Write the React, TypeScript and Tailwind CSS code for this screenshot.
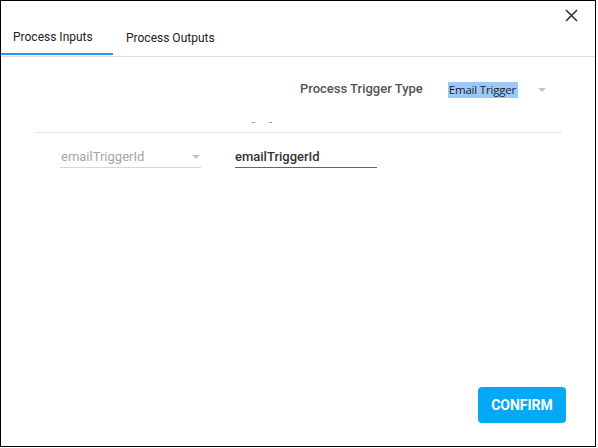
import React, { useState } from 'react';

const Caret: React.FC<{ className?: string }> = ({ className }) => (
  <svg width="8" height="4" viewBox="0 0 8 4" className={className}>
    <path d="M0 0 L8 0 L4 4 Z" fill="#c4c4c4" />
  </svg>
);

const App: React.FC = () => {
  const [tab, setTab] = useState('inputs');

  return (
    <div className="w-[596px] h-[447px] border border-black bg-white relative font-['Roboto',sans-serif] text-[#333]">
      {/* close */}
      <button className="absolute right-[17px] top-[8px] w-[13px] h-[13px]">
        <svg width="13" height="13" viewBox="0 0 13 13">
          <path d="M1 1 L12 12 M12 1 L1 12" stroke="#333" strokeWidth="1.6" />
        </svg>
      </button>

      <div className="flex h-[54px]">
        <button
          onClick={() => setTab('inputs')}
          className={`w-[112px] h-full pt-[20px] pl-[12px] text-left text-[12px] text-[#222] border-b-2 ${
            tab === 'inputs' ? 'border-[#2196f3]' : 'border-transparent'
          }`}
        >
          <span className="leading-[28px]">Process Inputs</span>
        </button>
        <button
          onClick={() => setTab('outputs')}
          className={`h-full pt-[21px] pl-[13px] text-left text-[12px] text-[#222] border-b-2 ${
            tab === 'outputs' ? 'border-[#2196f3]' : 'border-transparent'
          }`}
        >
          <span className="leading-[28px]">Process Outputs</span>
        </button>
      </div>
      <div className="h-px mt-px bg-[#dcdcdc]" />

      <div className="flex items-center justify-end mt-[22px] pr-[49px] h-[20px]">
        <span className="text-[13px] font-medium text-[#555] mr-[25px]">Process Trigger Type</span>
        <span className="font-['Open_Sans',sans-serif] text-[11.5px] leading-[14px] py-px pl-px pr-[2px] text-[#222] bg-[#99c9ff] whitespace-nowrap tracking-[-0.2px] mt-[2px]">
          Email Trigger
        </span>
        <Caret className="ml-[20px] mt-[2px]" />
      </div>

      <div className="relative mx-[33px] mt-[33px] h-px bg-[#e3e3e3]">
        <span className="absolute left-[218px] top-[-10px] w-[3px] h-px bg-[#999]" />
        <span className="absolute left-[235px] top-[-10px] w-[3px] h-px bg-[#999]" />
      </div>

      <div className="flex mt-[13px] pl-[59px]">
        <div className="w-[141px] h-[22px] flex items-center justify-between border-b border-[#d6d6d6]">
          <span className="text-[13px] text-[#a6a6a6] pl-px">emailTriggerId</span>
          <Caret className="mr-[1px]" />
        </div>
        <div className="ml-[34px] w-[142px] h-[22px] flex items-center border-b border-[#666]">
          <span className="text-[13px] font-medium text-[#333]">emailTriggerId</span>
        </div>
      </div>

      <div className="absolute left-[477px] top-[386px]">
        <button className="w-[88px] h-[36px] rounded-[4px] bg-[#03a9f4] text-white text-[14px] font-bold">
          CONFIRM
        </button>
      </div>
    </div>
  );
};

export default App;
